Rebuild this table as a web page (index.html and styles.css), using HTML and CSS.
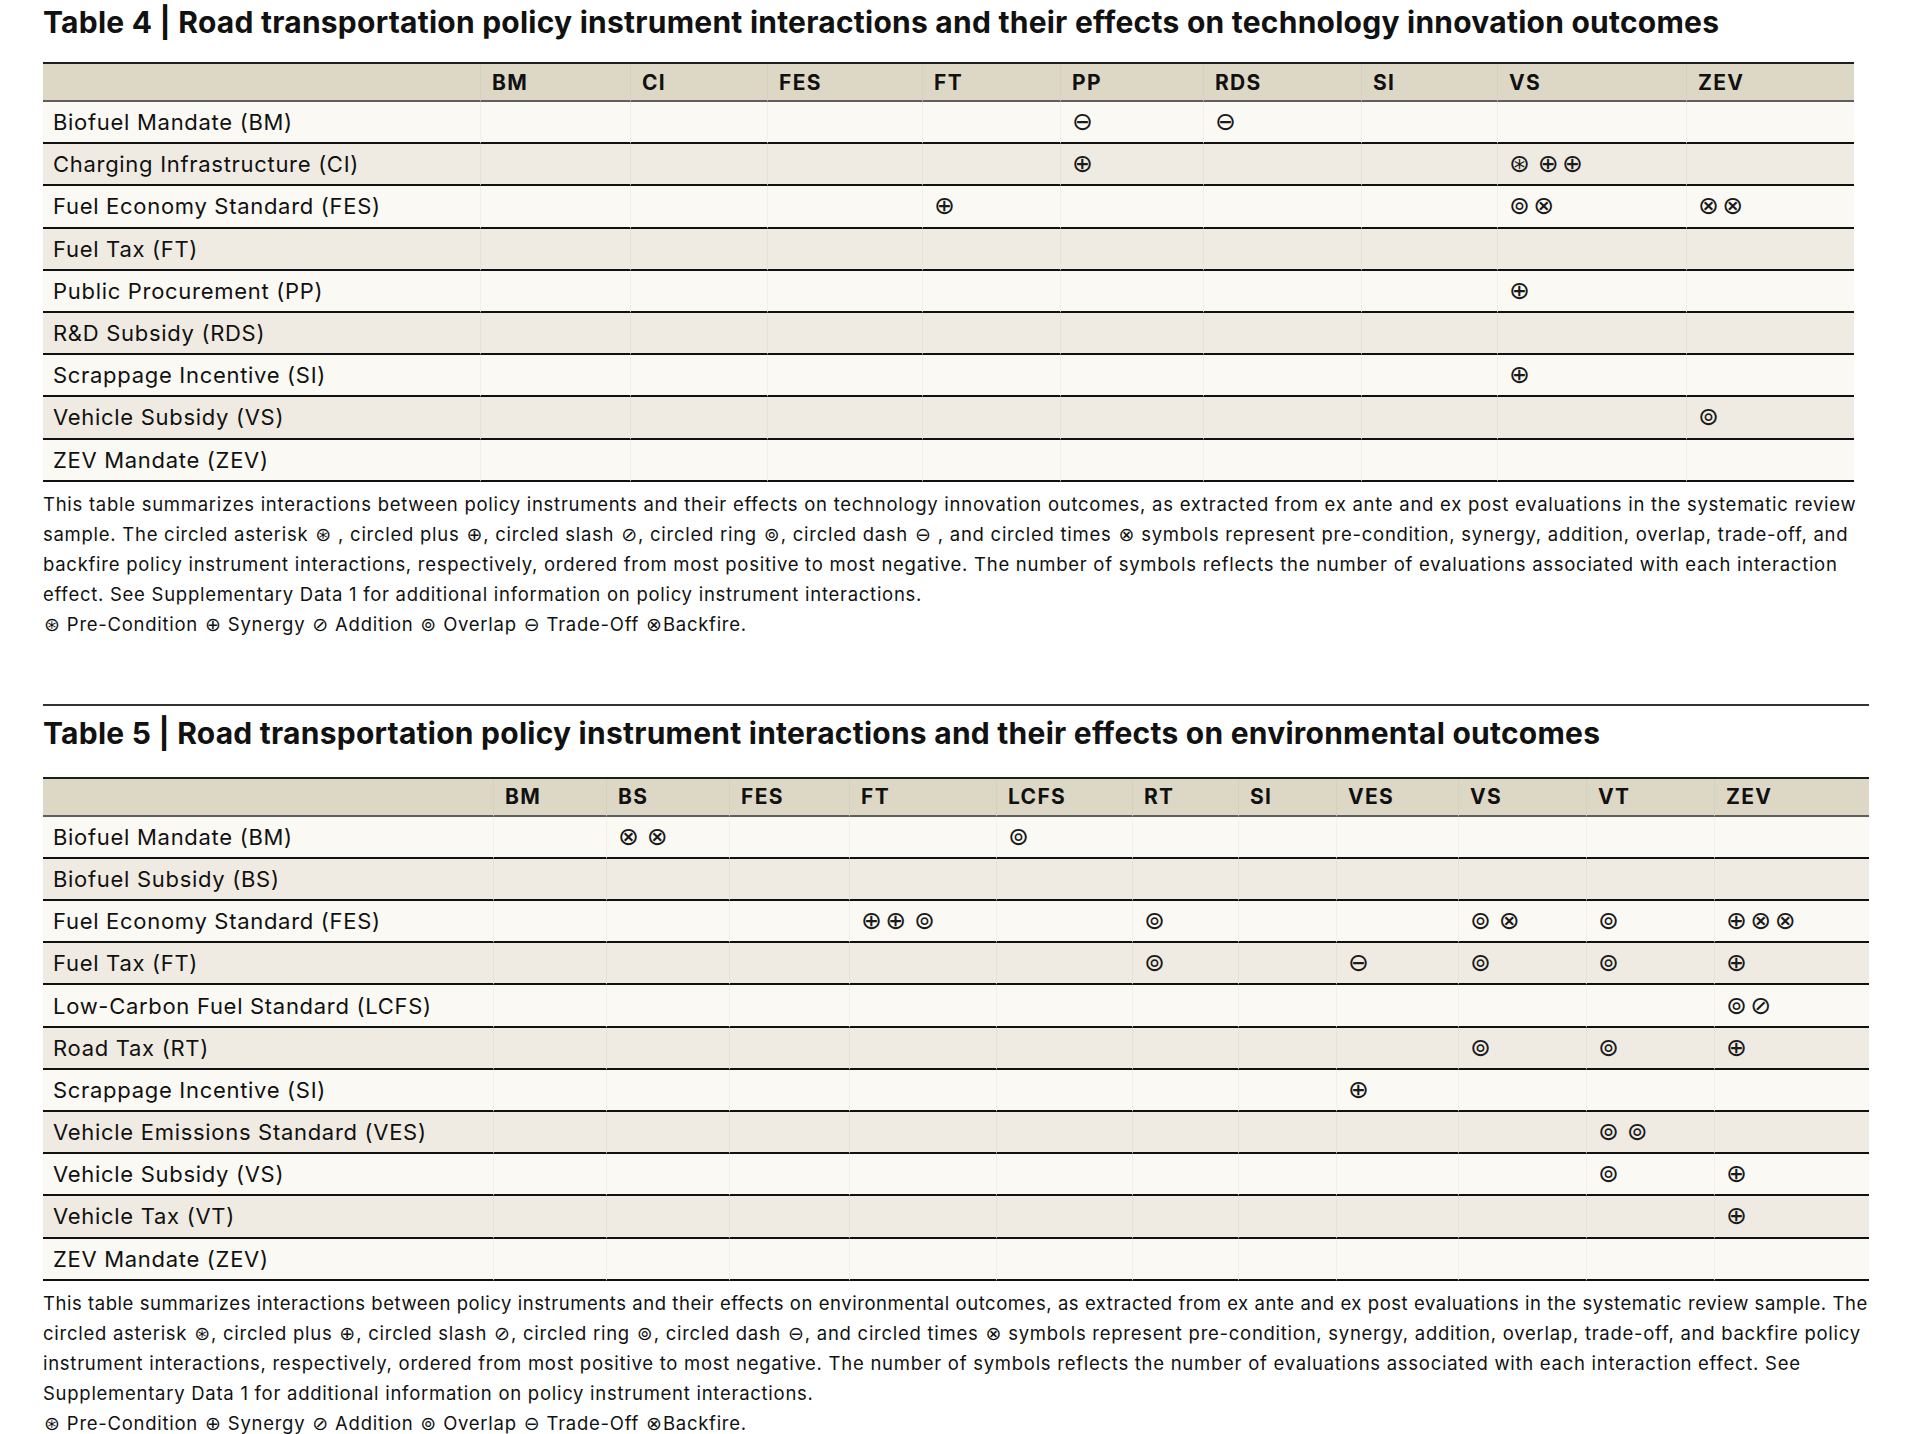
FILE: index.html
```html
<!DOCTYPE html>
<html lang="en">
<head>
<meta charset="utf-8">
<title>Tables 4 and 5</title>
<link rel="stylesheet" href="styles.css">
</head>
<body>
<section class="tbl t4">
  <h2 class="title">Table 4 | Road transportation policy instrument interactions and their effects on technology innovation outcomes</h2>
  <table class="grid">
    <colgroup><col><col><col><col><col><col><col><col><col><col></colgroup>
    <thead>
      <tr><th></th><th>BM</th><th>CI</th><th>FES</th><th>FT</th><th>PP</th><th>RDS</th><th>SI</th><th>VS</th><th>ZEV</th></tr>
    </thead>
    <tbody>
      <tr><td>Biofuel Mandate (BM)</td><td></td><td></td><td></td><td></td><td><span class="sym">⊖</span></td><td><span class="sym">⊖</span></td><td></td><td></td><td></td></tr>
      <tr><td>Charging Infrastructure (CI)</td><td></td><td></td><td></td><td></td><td><span class="sym">⊕</span></td><td></td><td></td><td><span class="sym">⊛ ⊕⊕</span></td><td></td></tr>
      <tr><td>Fuel Economy Standard (FES)</td><td></td><td></td><td></td><td><span class="sym">⊕</span></td><td></td><td></td><td></td><td><span class="sym">⊚⊗</span></td><td><span class="sym">⊗⊗</span></td></tr>
      <tr><td>Fuel Tax (FT)</td><td></td><td></td><td></td><td></td><td></td><td></td><td></td><td></td><td></td></tr>
      <tr><td>Public Procurement (PP)</td><td></td><td></td><td></td><td></td><td></td><td></td><td></td><td><span class="sym">⊕</span></td><td></td></tr>
      <tr><td>R&amp;D Subsidy (RDS)</td><td></td><td></td><td></td><td></td><td></td><td></td><td></td><td></td><td></td></tr>
      <tr><td>Scrappage Incentive (SI)</td><td></td><td></td><td></td><td></td><td></td><td></td><td></td><td><span class="sym">⊕</span></td><td></td></tr>
      <tr><td>Vehicle Subsidy (VS)</td><td></td><td></td><td></td><td></td><td></td><td></td><td></td><td></td><td><span class="sym">⊚</span></td></tr>
      <tr><td>ZEV Mandate (ZEV)</td><td></td><td></td><td></td><td></td><td></td><td></td><td></td><td></td><td></td></tr>
    </tbody>
  </table>
  <p class="caption">This table summarizes interactions between policy instruments and their effects on technology innovation outcomes, as extracted from ex ante and ex post evaluations in the systematic review<br>sample. The circled asterisk <span class="isym">⊛</span> , circled plus <span class="isym">⊕</span>, circled slash <span class="isym">⊘</span>, circled ring <span class="isym">⊚</span>, circled dash <span class="isym">⊖</span> , and circled times <span class="isym">⊗</span> symbols represent pre-condition, synergy, addition, overlap, trade-off, and<br>backfire policy instrument interactions, respectively, ordered from most positive to most negative. The number of symbols reflects the number of evaluations associated with each interaction<br>effect. See Supplementary Data 1 for additional information on policy instrument interactions.<br><span class="isym">⊛</span> Pre-Condition <span class="isym">⊕</span> Synergy <span class="isym">⊘</span> Addition <span class="isym">⊚</span> Overlap <span class="isym">⊖</span> Trade-Off <span class="isym">⊗</span>Backfire.</p>
</section>

<section class="tbl t5">
  <h2 class="title">Table 5 | Road transportation policy instrument interactions and their effects on environmental outcomes</h2>
  <table class="grid">
    <colgroup><col><col><col><col><col><col><col><col><col><col><col><col></colgroup>
    <thead>
      <tr><th></th><th>BM</th><th>BS</th><th>FES</th><th>FT</th><th>LCFS</th><th>RT</th><th>SI</th><th>VES</th><th>VS</th><th>VT</th><th>ZEV</th></tr>
    </thead>
    <tbody>
      <tr><td>Biofuel Mandate (BM)</td><td></td><td><span class="sym">⊗ ⊗</span></td><td></td><td></td><td><span class="sym">⊚</span></td><td></td><td></td><td></td><td></td><td></td><td></td></tr>
      <tr><td>Biofuel Subsidy (BS)</td><td></td><td></td><td></td><td></td><td></td><td></td><td></td><td></td><td></td><td></td><td></td></tr>
      <tr><td>Fuel Economy Standard (FES)</td><td></td><td></td><td></td><td><span class="sym">⊕⊕ ⊚</span></td><td></td><td><span class="sym">⊚</span></td><td></td><td></td><td><span class="sym">⊚ ⊗</span></td><td><span class="sym">⊚</span></td><td><span class="sym">⊕⊗⊗</span></td></tr>
      <tr><td>Fuel Tax (FT)</td><td></td><td></td><td></td><td></td><td></td><td><span class="sym">⊚</span></td><td></td><td><span class="sym">⊖</span></td><td><span class="sym">⊚</span></td><td><span class="sym">⊚</span></td><td><span class="sym">⊕</span></td></tr>
      <tr><td>Low-Carbon Fuel Standard (LCFS)</td><td></td><td></td><td></td><td></td><td></td><td></td><td></td><td></td><td></td><td></td><td><span class="sym">⊚⊘</span></td></tr>
      <tr><td>Road Tax (RT)</td><td></td><td></td><td></td><td></td><td></td><td></td><td></td><td></td><td><span class="sym">⊚</span></td><td><span class="sym">⊚</span></td><td><span class="sym">⊕</span></td></tr>
      <tr><td>Scrappage Incentive (SI)</td><td></td><td></td><td></td><td></td><td></td><td></td><td></td><td><span class="sym">⊕</span></td><td></td><td></td><td></td></tr>
      <tr><td>Vehicle Emissions Standard (VES)</td><td></td><td></td><td></td><td></td><td></td><td></td><td></td><td></td><td></td><td><span class="sym">⊚ ⊚</span></td><td></td></tr>
      <tr><td>Vehicle Subsidy (VS)</td><td></td><td></td><td></td><td></td><td></td><td></td><td></td><td></td><td></td><td><span class="sym">⊚</span></td><td><span class="sym">⊕</span></td></tr>
      <tr><td>Vehicle Tax (VT)</td><td></td><td></td><td></td><td></td><td></td><td></td><td></td><td></td><td></td><td></td><td><span class="sym">⊕</span></td></tr>
      <tr><td>ZEV Mandate (ZEV)</td><td></td><td></td><td></td><td></td><td></td><td></td><td></td><td></td><td></td><td></td><td></td></tr>
    </tbody>
  </table>
  <p class="caption"><span class="tight">This table summarizes interactions between policy instruments and their effects on environmental outcomes, as extracted from ex ante and ex post evaluations in the systematic review sample. The</span><br>circled asterisk <span class="isym">⊛</span>, circled plus <span class="isym">⊕</span>, circled slash <span class="isym">⊘</span>, circled ring <span class="isym">⊚</span>, circled dash <span class="isym">⊖</span>, and circled times <span class="isym">⊗</span> symbols represent pre-condition, synergy, addition, overlap, trade-off, and backfire policy<br>instrument interactions, respectively, ordered from most positive to most negative. The number of symbols reflects the number of evaluations associated with each interaction effect. See<br>Supplementary Data 1 for additional information on policy instrument interactions.<br><span class="isym">⊛</span> Pre-Condition <span class="isym">⊕</span> Synergy <span class="isym">⊘</span> Addition <span class="isym">⊚</span> Overlap <span class="isym">⊖</span> Trade-Off <span class="isym">⊗</span>Backfire.</p>
</section>
</body>
</html>
```

FILE: styles.css
```css
html, body {
  margin: 0;
  background: #ffffff;
}

body {
  padding: 4px 0 0 43px;
  color: #111111;
  font-family: Inter, "Liberation Sans", Arial, sans-serif;
}

.title {
  margin: 0 0 22px;
  font-size: 30px;
  font-weight: 700;
  line-height: 36px;
  white-space: nowrap;
  letter-spacing: 0.24px;
}

.grid {
  border-collapse: separate;
  border-spacing: 0;
  table-layout: fixed;
  border-top: 2px solid #1e1e1e;
}

.grid th {
  height: 36px;
  padding: 0 0 0 11px;
  background: #ddd8c6;
  border-bottom: 2px solid #5e5e5e;
  text-align: left;
  font-size: 21px;
  font-weight: 700;
  letter-spacing: 1.3px;
  vertical-align: middle;
}

.grid td {
  height: 40.2px;
  padding: 0 0 0 11px;
  border-bottom: 2px solid #111111;
  font-size: 22px;
  letter-spacing: 0.7px;
  white-space: nowrap;
  vertical-align: middle;
}

.grid th + th,
.grid td + td {
  border-left: 1px solid rgba(0, 0, 0, 0.035);
}

.grid th:first-child,
.grid td:first-child {
  padding-left: 10px;
}

.grid tbody tr:nth-child(odd) td {
  background: #fbf9f4;
}

.grid tbody tr:nth-child(even) td {
  background: #efebe2;
}

.sym {
  font-family: "DejaVu Sans", sans-serif;
  font-size: 25px;
  line-height: 1;
  letter-spacing: 3.4px;
  word-spacing: -7px;
  color: #1a1a1a;
}

.caption {
  margin: 7px 0 0;
  font-size: 18.5px;
  line-height: 30px;
  letter-spacing: 0.73px;
  white-space: nowrap;
}

.caption .tight {
  letter-spacing: 0.55px;
}

.isym {
  font-family: "DejaVu Sans", sans-serif;
  font-size: 19px;
  line-height: 0;
  letter-spacing: 0;
  margin: 0 1px;
}

/* Table 4 */
.t4 .grid { width: 1811px; }
.t4 col:nth-child(1) { width: 437px; }
.t4 col:nth-child(2) { width: 150px; }
.t4 col:nth-child(3) { width: 137px; }
.t4 col:nth-child(4) { width: 155px; }
.t4 col:nth-child(5) { width: 138px; }
.t4 col:nth-child(6) { width: 143px; }
.t4 col:nth-child(7) { width: 158px; }
.t4 col:nth-child(8) { width: 136px; }
.t4 col:nth-child(9) { width: 189px; }
.t4 col:nth-child(10) { width: 168px; }

/* Table 5 */
.t5 {
  width: 1826px;
  margin-top: 65px;
  padding-top: 9px;
  border-top: 2px solid #333333;
}
.t5 .title { margin-bottom: 26px; }
.t5 .grid { width: 1826px; }
.t5 col:nth-child(1) { width: 450px; }
.t5 col:nth-child(2) { width: 113px; }
.t5 col:nth-child(3) { width: 123px; }
.t5 col:nth-child(4) { width: 120px; }
.t5 col:nth-child(5) { width: 147px; }
.t5 col:nth-child(6) { width: 136px; }
.t5 col:nth-child(7) { width: 106px; }
.t5 col:nth-child(8) { width: 98px; }
.t5 col:nth-child(9) { width: 122px; }
.t5 col:nth-child(10) { width: 128px; }
.t5 col:nth-child(11) { width: 128px; }
.t5 col:nth-child(12) { width: 155px; }
```
